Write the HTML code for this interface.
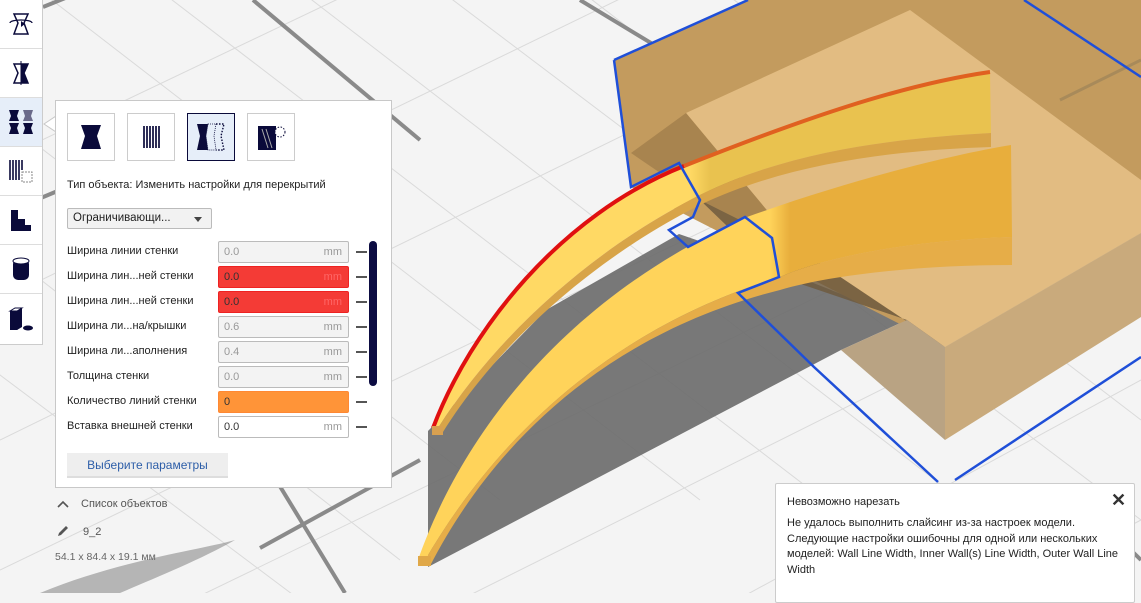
<!DOCTYPE html>
<html><head><meta charset="utf-8">
<style>
*{margin:0;padding:0;box-sizing:border-box}
body{width:1141px;height:593px;overflow:hidden;position:relative;background:#f4f4f4;font-family:"Liberation Sans","Noto Sans CJK SC",sans-serif;color:#222}
svg.bg{position:absolute;left:0;top:0}
.tb{position:absolute;left:0;top:0;width:43px;height:345px;background:#fff;border-right:1px solid #ccc;border-bottom:1px solid #ccc}
.tb div{height:49px;border-bottom:1px solid #ddd;display:flex;align-items:center;justify-content:center}
.tb .sel{background:#e6eef9}
.panel{position:absolute;left:55px;top:100px;width:337px;height:388px;background:#fff;border:1px solid #c8c8c8}
.ib{position:absolute;top:12px;width:48px;height:48px;border:1px solid #ccc;background:#fff;display:flex;align-items:center;justify-content:center}
.ib.sel{border:1px solid #0a0a3a;background:#e6eef9}
.t{position:absolute;font-size:11px;white-space:nowrap}
.dd{position:absolute;left:11px;top:107px;width:145px;height:21px;border:1px solid #bbb;border-radius:2px;background:#f2f2f2;font-size:11.5px;padding:3px 5px}
.dd:after{content:"";position:absolute;right:9px;top:8px;border:4px solid transparent;border-top:5px solid #444}
.row{position:absolute;left:11px;height:22px;width:300px}
.row .l{position:absolute;left:0;top:4px;font-size:11px}
.row .in{position:absolute;left:151px;top:0;width:131px;height:22px;border:1px solid #bbb;border-radius:2px;background:#f3f3f3;font-size:11px;padding:4px 5px;color:#999}
.row .in span{position:absolute;right:6px;top:4px;color:#999}
.row .in.red{background:#f43b36;color:#333;border-color:#e22}
.row .in.red span{color:#f66}
.row .in.or{background:#ff9438;color:#333;border-color:#f83}
.row .in.wh{background:#fff;color:#333}
.row .m{position:absolute;left:289px;top:10px;width:11px;height:2px;background:#555}
.sc{position:absolute;left:313px;top:140px;width:8px;height:145px;background:#0c0c42;border-radius:4px}
.btn{position:absolute;left:11px;top:352px;width:161px;height:25px;background:#eee;border-bottom:2px solid #ddd;color:#2d5ea8;font-size:12px;text-align:center;line-height:24px}
.note{position:absolute;left:775px;top:483px;width:360px;height:120px;background:#fff;border:1px solid #ccc;border-radius:2px}
</style></head><body>
<svg class="bg" width="1141" height="593" viewBox="0 0 1141 593">
<defs>
<linearGradient id="ua" gradientUnits="userSpaceOnUse" x1="690" y1="0" x2="710" y2="0"><stop offset="0" stop-color="#ffd964"/><stop offset="1" stop-color="#e9c24f"/></linearGradient>
<linearGradient id="la" gradientUnits="userSpaceOnUse" x1="770" y1="0" x2="790" y2="0"><stop offset="0" stop-color="#ffd35a"/><stop offset="1" stop-color="#e8ae3c"/></linearGradient>
</defs>
<g stroke="#dadada" stroke-width="1" fill="none">
<path d="M-100,40 L500,500 M0,-40 L700,500 M120,-40 L850,520 M260,-40 L1000,530 M400,-40 L1141,520 M540,-40 L1141,420 M680,-40 L1141,300 M820,-40 L1141,200 M-100,170 L400,560 M-100,300 L300,600"/>
<path d="M0,160 L420,-40 M0,300 L700,-40 M0,440 L900,0 M0,570 L1141,20 M150,620 L1141,140 M420,620 L1141,260 M700,620 L1141,380 M950,620 L1141,520"/>
</g>
<g stroke="#8a8a8a" stroke-width="4" fill="none">
<path d="M253,0 L420,140"/>
<path d="M580,0 L712,80"/>
<path d="M43,7 L110,-20"/>
<path d="M0,215 L60,190"/>
<path d="M270,470 L345,593"/>
<path d="M260,548 L420,460"/>
<path d="M1141,560 L1100,520"/>
</g>
<polygon points="428,431 546,310 679,234 760,262 907,320 841,350 428,567" fill="#6a6a6a" opacity="0.9"/>
<polygon points="614,60 748,0 1141,0 1141,233 945,347 631,187" fill="#c39b5e"/>
<polygon points="686,113 910,10 1141,180 1141,233 945,347 800,250" fill="#e2bc82"/>
<polygon points="631,153 686,113 800,250 700,200" fill="#a8844f"/>
<polygon points="700,200 800,250 945,347 907,320 780,277" fill="#6e5a3e" opacity="0.85"/>
<polygon points="945,347 1141,233 1141,317 945,440" fill="#c9aa7c"/>
<polygon points="841,350 907,320 945,347 945,440" fill="#b9a383"/>
<path d="M1141,60 L1060,100" stroke="#a88a5a" stroke-width="3"/>
<path d="M433,428 C470,330 560,210 700,160 C800,120 900,85 990,72 L991,133 C900,138 790,150 700,195 C600,245 500,330 438,428 Z" fill="url(#ua)"/>
<path d="M443,432 C500,340 600,255 700,205 C790,162 900,150 991,147 L991,133 C900,138 790,150 700,195 C600,245 500,330 438,428 Z" fill="#d8a448"/>
<path d="M433,428 C470,330 560,215 684,166" stroke="#e01010" stroke-width="4" fill="none"/>
<path d="M684,166 C800,120 900,85 990,72" stroke="#e06020" stroke-width="4" fill="none"/>
<rect x="432" y="426" width="11" height="9" fill="#d8a050"/>
<path d="M418,560 C460,440 560,300 747,217 C850,180 950,155 1011,145 L1012,237 C920,240 830,255 780,277 C620,325 500,430 424,562 Z" fill="url(#la)"/>
<path d="M430,566 C500,430 620,330 780,290 C830,275 920,265 1012,265 L1012,237 C920,240 830,255 780,277 C620,325 500,430 424,562 Z" fill="#e6ad48"/>
<rect x="418" y="556" width="13" height="10" fill="#e0a848"/>
<path d="M614,60 L748,0 M1024,0 L1141,77 M614,60 L631,187 L679,163 L700,200 L693,217 L669,230 L688,247 L745,217 L772,238 L779,277 L738,293 L814,367 L938,482 M1141,357 L955,480" stroke="#1f4fd8" stroke-width="2.5" fill="none"/>
<path d="M40,593 C120,560 200,550 235,540 C200,560 150,580 120,593 Z" fill="#8a8a8a" opacity="0.6"/>
</svg>

<div class="tb">
<div><svg width="26" height="26" viewBox="0 0 26 26"><path d="M6,3 H20 L16,12 L20,23 H6 L10,12 Z" fill="none" stroke="#0a0a3a" stroke-width="1.5"/><path d="M2,12 C2,8 24,8 24,12" fill="none" stroke="#0a0a3a" stroke-width="1.3"/><path d="M13,10 L17,13 L13,16Z" fill="#0a0a3a"/></svg></div>
<div><svg width="26" height="26" viewBox="0 0 26 26"><path d="M6,4 H20 L16,13 L20,23 H6 L10,13 Z" fill="none" stroke="#0a0a3a" stroke-width="1.5"/><path d="M13,4 H20 L16,13 L20,23 H13Z" fill="#0a0a3a"/><line x1="13" y1="1" x2="13" y2="25" stroke="#0a0a3a"/></svg></div>
<div class="sel"><svg width="28" height="28" viewBox="0 0 28 28"><path d="M2,2 H12 L10,8 L12,13 H2 L4,8Z M2,15 H12 L10,20 L12,26 H2 L4,20Z M16,15 H26 L24,20 L26,26 H16 L18,20Z" fill="#0a0a3a"/><path d="M16,2 H26 L24,8 L26,13 H16 L18,8Z" fill="#6a6a8a"/></svg></div>
<div><svg width="28" height="28" viewBox="0 0 28 28"><path d="M3,3v20M6,3v20M9,3v20M12,3v20M15,3v10" stroke="#0a0a3a" stroke-width="1.6"/><rect x="15" y="15" width="10" height="10" fill="none" stroke="#888" stroke-dasharray="2,1"/></svg></div>
<div><svg width="26" height="26" viewBox="0 0 26 26"><path d="M3,3 H10 V12 H17 V18 H23 V24 H3Z" fill="#0a0a3a"/></svg></div>
<div><svg width="26" height="28" viewBox="0 0 26 28"><rect x="5" y="4" width="16" height="21" rx="5" fill="#0a0a3a"/><ellipse cx="13" cy="6" rx="8" ry="3" fill="#fff" stroke="#0a0a3a"/></svg></div>
<div style="border:none"><svg width="28" height="28" viewBox="0 0 28 28"><path d="M3,6 L8,3 H15 V22 L10,25 H3Z" fill="#0a0a3a"/><path d="M3,6 L8,3 H15 L10,6Z M10,6 V25" fill="#fff" stroke="#0a0a3a"/><ellipse cx="21" cy="23" rx="5" ry="2.5" fill="#0a0a3a"/></svg></div>
</div>
<svg style="position:absolute;left:43px;top:116px" width="13" height="16"><path d="M13,0 L1,8 L13,16" fill="#fff" stroke="#c8c8c8"/></svg>

<div class="panel">
<div class="ib" style="left:11px"><svg width="30" height="30" viewBox="0 0 30 30"><path d="M5,3 H25 L21,14 L25,27 H5 L9,14Z" fill="#0a0a3a"/></svg></div>
<div class="ib" style="left:71px"><svg width="30" height="30" viewBox="0 0 30 30"><path d="M8,4v22M11,4v22M14,4v22M17,4v22M20,4v22M23,4v22" stroke="#0a0a3a" stroke-width="1.7"/></svg></div>
<div class="ib sel" style="left:131px"><svg width="34" height="34" viewBox="0 0 34 34"><path d="M3,4 H14 L12,16 L14,30 H3 L6,16Z" fill="#0a0a3a"/><path d="M14,4 H22 L20,16 L22,30 H14 L12,16Z" fill="none" stroke="#0a0a3a" stroke-width="0.8" stroke-dasharray="1,1"/><path d="M22,4 H30 L27,16 L30,30 H22" fill="none" stroke="#0a0a3a" stroke-width="1.4" stroke-dasharray="1.5,1.5"/></svg></div>
<div class="ib" style="left:191px"><svg width="34" height="34" viewBox="0 0 34 34"><path d="M4,6 H22 V30 H4Z" fill="#0a0a3a"/><path d="M8,9 L14,28 M12,9 L18,28" stroke="#aaa"/><circle cx="26" cy="12" r="5" fill="#fff" stroke="#0a0a3a" stroke-dasharray="1.5,1.5"/></svg></div>
<div class="t" style="left:11px;top:78px">Тип объекта: Изменить настройки для перекрытий</div>
<div class="dd">Ограничивающи...</div>
<div class="row" style="top:140px"><div class="l">Ширина линии стенки</div><div class="in">0.0<span>mm</span></div><div class="m"></div></div>
<div class="row" style="top:165px"><div class="l">Ширина лин...ней стенки</div><div class="in red">0.0<span>mm</span></div><div class="m"></div></div>
<div class="row" style="top:190px"><div class="l">Ширина лин...ней стенки</div><div class="in red">0.0<span>mm</span></div><div class="m"></div></div>
<div class="row" style="top:215px"><div class="l">Ширина ли...на/крышки</div><div class="in">0.6<span>mm</span></div><div class="m"></div></div>
<div class="row" style="top:240px"><div class="l">Ширина ли...аполнения</div><div class="in">0.4<span>mm</span></div><div class="m"></div></div>
<div class="row" style="top:265px"><div class="l">Толщина стенки</div><div class="in">0.0<span>mm</span></div><div class="m"></div></div>
<div class="row" style="top:290px"><div class="l">Количество линий стенки</div><div class="in or">0</div><div class="m"></div></div>
<div class="row" style="top:315px"><div class="l">Вставка внешней стенки</div><div class="in wh">0.0<span>mm</span></div><div class="m"></div></div>
<div class="sc"></div>
<div class="btn">Выберите параметры</div>
</div>

<svg style="position:absolute;left:57px;top:500px" width="12" height="8"><path d="M1,7 L6,2 L11,7" fill="none" stroke="#555" stroke-width="1.6"/></svg>
<div class="t" style="left:81px;top:498px;color:#555">Список объектов</div>
<svg style="position:absolute;left:56px;top:524px" width="14" height="14"><path d="M2,12 L3,9 L10,2 L12,4 L5,11Z" fill="#555"/></svg>
<div class="t" style="left:83px;top:526px;color:#555">9_2</div>
<div class="t" style="left:55px;top:551px;color:#666;font-size:10.5px">54.1 x 84.4 x 19.1 мм</div>

<div class="note">
<div class="t" style="left:11px;top:12px;font-size:11px;color:#222">Невозможно нарезать</div>
<div style="position:absolute;left:335px;top:6px;font-size:18px;font-weight:bold;color:#333">✕</div>
<div style="position:absolute;left:11px;top:32px;width:340px;font-size:11px;line-height:15.5px;color:#222">Не удалось выполнить слайсинг из-за настроек модели. Следующие настройки ошибочны для одной или нескольких моделей: Wall Line Width, Inner Wall(s) Line Width, Outer Wall Line Width</div>
</div>
</body></html>
